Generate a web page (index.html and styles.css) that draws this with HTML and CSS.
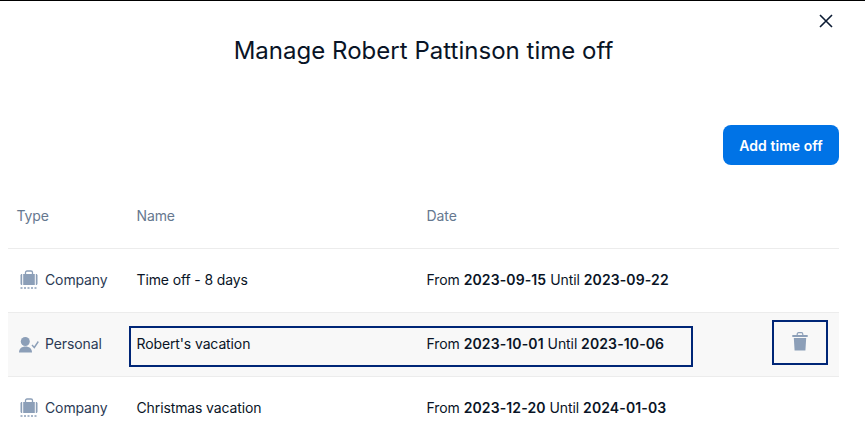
FILE: index.html
```html
<!DOCTYPE html>
<html lang="en">
<head>
    <meta charset="UTF-8">
    <meta name="viewport" content="width=device-width, initial-scale=1.0">
    <title>Manage time off</title>
    <link rel="stylesheet" href="styles.css">
</head>
<body>
    <div class="modal">
        <div class="close-row">
            <button class="close-btn" aria-label="Close">
                <svg width="14" height="14" viewBox="0 0 14 14"><path d="M1 1L13 13M13 1L1 13" stroke="#0b1b33" stroke-width="1.6" fill="none"/></svg>
            </button>
        </div>
        <h1>Manage Robert Pattinson time off</h1>
        <div class="actions">
            <button class="add-btn">Add time off</button>
        </div>
        <div class="table">
            <div class="row head">
                <div class="type">Type</div>
                <div class="info">
                    <div class="name">Name</div>
                    <div class="date">Date</div>
                </div>
            </div>
            <div class="row">
                <div class="type">
                    <svg class="icon" width="20" height="20" viewBox="0 0 20 20"><use href="#case"/></svg>
                    Company
                </div>
                <div class="info">
                    <div class="name">Time off - 8 days</div>
                    <div class="date">From <b>2023-09-15</b> Until <b>2023-09-22</b></div>
                </div>
            </div>
            <div class="row selected">
                <div class="type">
                    <svg class="icon" width="20" height="20" viewBox="0 0 20 20">
                        <circle cx="6.300" cy="7.500" r="4.500" fill="#8c9fb8"/>
                        <path d="M0 18.500C0 14.500 3 12.500 6.500 12.500S13 14.500 13 18.500Z" fill="#8c9fb8"/>
                        <path d="M13 11L15.300 13.500L19.300 7.500" stroke="#8c9fb8" stroke-width="1.400" fill="none"/>
                    </svg>
                    Personal
                </div>
                <div class="info focused">
                    <div class="name">Robert's vacation</div>
                    <div class="date">From <b>2023-10-01</b> Until <b>2023-10-06</b></div>
                </div>
                <button class="delete-btn" aria-label="Delete">
                    <svg width="16" height="19" viewBox="0 0 16 19">
                        <path d="M5.200 3V2.200C5.200 1.300 5.800.700 6.500.700H9.500C10.200.700 10.800 1.300 10.800 2.200V3" stroke="#8c9fb8" stroke-width="1.200" fill="none"/>
                        <path d="M.300 3H15.700V5H.300Z" fill="#8c9fb8"/>
                        <path d="M1.800 6H14.200L13.400 18.500H2.600Z" fill="#8c9fb8"/>
                    </svg>
                </button>
            </div>
            <div class="row">
                <div class="type">
                    <svg class="icon" width="20" height="20" viewBox="0 0 20 20"><use href="#case"/></svg>
                    Company
                </div>
                <div class="info">
                    <div class="name">Christmas vacation</div>
                    <div class="date">From <b>2023-12-20</b> Until <b>2024-01-03</b></div>
                </div>
            </div>
        </div>
    </div>

    <svg class="defs" width="0" height="0">
        <symbol id="case" viewBox="0 0 20 20">
            <path d="M6.500 4V2.500C6.500 1.600 7.200 1 8 1H12C12.800 1 13.500 1.600 13.500 2.500V4" stroke="#8c9fb8" stroke-width="1.300" fill="none"/>
            <path d="M1.500 5.500C1.500 4.600 2 4 2.800 4H3.200V15H2.800C2 15 1.500 14.400 1.500 13.500Z" fill="#8c9fb8"/>
            <path d="M4.200 4H15.800V15H4.200Z" fill="#8c9fb8"/>
            <path d="M16.800 4H17.200C18 4 18.500 4.600 18.500 5.500V13.500C18.500 14.400 18 15 17.200 15H16.800Z" fill="#8c9fb8"/>
            <path d="M1.500 18H18.500" stroke="#8c9fb8" stroke-width="1.600" stroke-dasharray="2 1.500" fill="none"/>
        </symbol>
    </svg>
</body>
</html>
```

FILE: styles.css
```css
html, body {
    margin: 0;
    height: 437px;
    overflow: hidden;
    background: #fff;
}
body {
    font-family: Inter, "Liberation Sans", sans-serif;
    font-size: 14px;
    letter-spacing: -0.12px;
    color: #091426;
}
.defs {
    display: block;
}
.modal {
    border-top: 1px solid #000;
    padding: 0 26px 0 8px;
}
.close-row {
    display: flex;
    justify-content: flex-end;
    height: 31px;
    align-items: flex-end;
}
.close-btn {
    display: flex;
    padding: 0;
    margin-bottom: 4px;
    margin-right: 6px;
    background: none;
    border: none;
}
h1 {
    margin: 1px 0 0 0;
    height: 36px;
    line-height: 36px;
    font-size: 24px;
    font-weight: 400;
    letter-spacing: 0.02px;
    text-align: center;
    color: #091426;
}
.actions {
    display: flex;
    justify-content: flex-end;
    margin-top: 56px;
}
.add-btn {
    width: 116px;
    height: 40px;
    background: #0073e6;
    color: #fff;
    border: none;
    border-radius: 8px;
    font-family: inherit;
    font-size: 14px;
    font-weight: 600;
    letter-spacing: 0.05px;
}
.table {
    margin-top: 20px;
}
.row {
    display: flex;
    align-items: center;
    box-sizing: border-box;
    height: 64px;
    padding-bottom: 2px;
    border-bottom: 1px solid #ececec;
}
.row.head {
    color: #66788f;
}
.row.selected {
    background: #f8f8f8;
}
.type {
    display: flex;
    align-items: center;
    gap: 6px;
    width: 121px;
    padding-left: 8.5px;
    box-sizing: border-box;
    flex-shrink: 0;
    color: #2b3a55;
}
.row.head .type {
    color: #66788f;
}
.icon {
    margin-left: 2.5px;
}
.info {
    display: flex;
    align-items: center;
    width: 564px;
    padding: 0 7.5px;
    box-sizing: border-box;
    flex-shrink: 0;
}
.info.focused {
    height: 41px;
    margin-top: 6px;
    padding: 0 5.5px 6px;
    border: 2px solid #002677;
}
.name {
    width: 290px;
    flex-shrink: 0;
}
.date {
    letter-spacing: -0.07px;
}
b {
    font-weight: 600;
    letter-spacing: 0.11px;
}
.delete-btn {
    display: flex;
    align-items: center;
    justify-content: center;
    width: 56px;
    height: 45px;
    margin-left: 79px;
    margin-bottom: 2px;
    padding: 0 0 2px;
    background: none;
    border: 2px solid #002677;
}
```
